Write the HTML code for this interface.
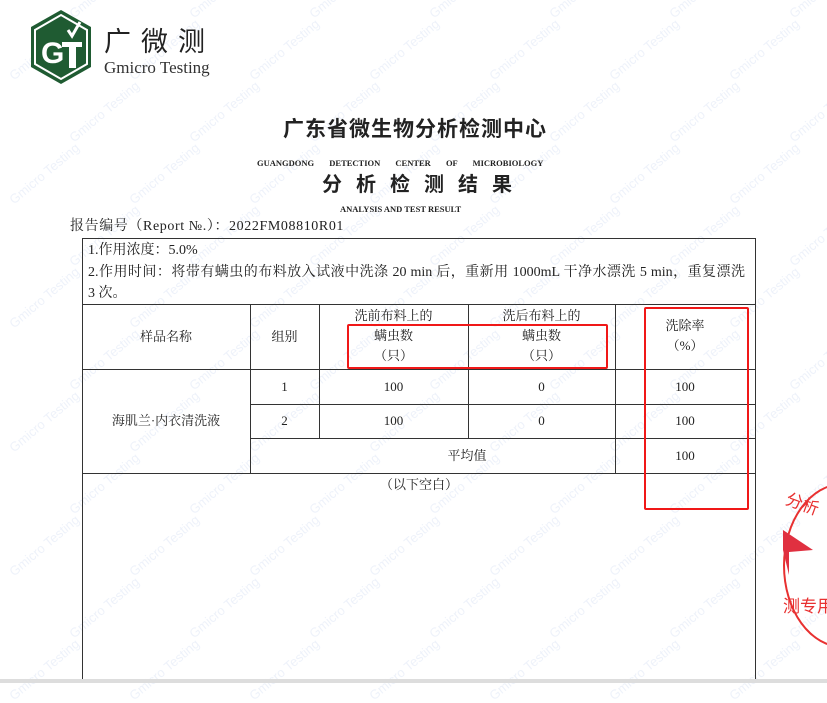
<!DOCTYPE html>
<html><head><meta charset="utf-8"><style>
*{margin:0;padding:0;box-sizing:border-box}
body{width:827px;height:683px;overflow:hidden;background:#fff;position:relative;font-family:"Liberation Serif","Noto Serif CJK SC",serif;color:#222}
.a{position:absolute;white-space:nowrap}
.l{position:absolute;background:#333}
.t{position:absolute;text-align:center;font-size:13px;line-height:20px}
.wm{position:absolute;color:#eef2fa;font-family:"Liberation Sans",sans-serif;font-size:13px;transform:rotate(-40deg);white-space:nowrap}
.j{display:block;width:657px;text-align:justify;text-align-last:justify}
</style></head><body>
<div id="wmk"></div>
<script>
var h='';for(var y=-20;y<720;y+=62){for(var x=-40;x<860;x+=120){h+='<div class="wm" style="left:'+(x+(y/62%2)*60)+'px;top:'+y+'px">Gmicro Testing</div>';}}document.getElementById('wmk').innerHTML=h;
</script>
<svg class="a" style="left:28px;top:8px" width="66" height="78" viewBox="0 0 66 78">
<polygon points="33,2 63,19 63,59 33,76 3,59 3,19" fill="#1f5b32"/>
<polygon points="33,7 59,22 59,56 33,71 7,56 7,22" fill="none" stroke="#fff" stroke-width="2"/>
<text x="13" y="55" font-family="Liberation Sans" font-weight="bold" font-size="30" fill="#fff">G</text>
<rect x="34" y="34" width="20" height="5" fill="#fff"/><rect x="41" y="34" width="7" height="26" fill="#fff"/>
<path d="M40 22 L44 28 L52 14" stroke="#fff" stroke-width="3" fill="none"/>
</svg>
<div class="a" style="left:104px;top:24px;font-family:'Noto Sans CJK SC',sans-serif;font-size:27px;letter-spacing:10px;color:#222;line-height:32px">广微测</div>
<div class="a" style="left:104px;top:58px;font-size:17px;color:#333">Gmicro Testing</div>

<div class="a" style="left:283px;top:115px;font-family:'Noto Sans CJK SC',sans-serif;font-size:21px;line-height:26px;font-weight:bold;letter-spacing:1px">广东省微生物分析检测中心</div>
<div class="a" style="left:257px;top:157px;font-size:8.5px;font-weight:bold;word-spacing:13px;line-height:12px">GUANGDONG DETECTION CENTER OF MICROBIOLOGY</div>
<div class="a" style="left:322px;top:170px;font-family:'Noto Sans CJK SC',sans-serif;font-size:20px;line-height:26px;font-weight:bold;letter-spacing:14px">分析检测结果</div>
<div class="a" style="left:340px;top:203px;font-size:8.5px;font-weight:bold;line-height:12px">ANALYSIS AND TEST RESULT</div>
<div class="a" style="left:70px;top:218px;font-size:14px;line-height:18px;letter-spacing:0.6px">报告编号（Report №.）：2022FM08810R01</div>

<div class="l" style="left:82px;top:238px;width:674px;height:1px"></div>
<div class="l" style="left:82px;top:238px;width:1px;height:445px"></div>
<div class="l" style="left:755px;top:238px;width:1px;height:445px"></div>
<div class="l" style="left:82px;top:304px;width:674px;height:1px"></div>
<div class="l" style="left:82px;top:369px;width:674px;height:1px"></div>
<div class="l" style="left:250px;top:404px;width:506px;height:1px"></div>
<div class="l" style="left:250px;top:438px;width:506px;height:1px"></div>
<div class="l" style="left:82px;top:473px;width:674px;height:1px"></div>
<div class="l" style="left:250px;top:304px;width:1px;height:169px"></div>
<div class="l" style="left:319px;top:304px;width:1px;height:134px"></div>
<div class="l" style="left:468px;top:304px;width:1px;height:134px"></div>
<div class="l" style="left:615px;top:304px;width:1px;height:169px"></div>

<div class="a" style="left:88px;top:240px;font-size:14px;line-height:21.5px">1.作用浓度：5.0%<span class="j">2.作用时间：将带有螨虫的布料放入试液中洗涤 20 min 后，重新用 1000mL 干净水漂洗 5 min，重复漂洗</span>3 次。</div>

<div class="t" style="left:82px;top:327px;width:168px">样品名称</div>
<div class="t" style="left:250px;top:327px;width:69px">组别</div>
<div class="t" style="left:319px;top:306px;width:149px">洗前布料上的<br>螨虫数<br>（只）</div>
<div class="t" style="left:468px;top:306px;width:147px">洗后布料上的<br>螨虫数<br>（只）</div>
<div class="t" style="left:615px;top:316px;width:140px">洗除率<br>（%）</div>
<div class="t" style="left:82px;top:411px;width:168px">海肌兰·内衣清洗液</div>
<div class="t" style="left:250px;top:377px;width:69px">1</div>
<div class="t" style="left:319px;top:377px;width:149px">100</div>
<div class="t" style="left:468px;top:377px;width:147px">0</div>
<div class="t" style="left:615px;top:377px;width:140px">100</div>
<div class="t" style="left:250px;top:411px;width:69px">2</div>
<div class="t" style="left:319px;top:411px;width:149px">100</div>
<div class="t" style="left:468px;top:411px;width:147px">0</div>
<div class="t" style="left:615px;top:411px;width:140px">100</div>
<div class="t" style="left:319px;top:446px;width:296px">平均值</div>
<div class="t" style="left:615px;top:446px;width:140px">100</div>
<div class="t" style="left:82px;top:475px;width:674px">（以下空白）</div>

<div class="a" style="left:347px;top:324px;width:261px;height:45px;border:2.5px solid #f01818;border-radius:2px"></div>
<div class="a" style="left:644px;top:307px;width:105px;height:203px;border:2.5px solid #f01818;border-radius:2px"></div>

<div class="a" style="left:783px;top:483px;width:120px;height:165px;border:2px solid #e83030;border-radius:50%;border-right:none"></div>
<div class="a" style="left:786px;top:490px;color:#e83030;font-family:'Noto Sans CJK SC',sans-serif;font-size:17px;transform:rotate(20deg)">分析</div>
<svg class="a" style="left:783px;top:530px" width="30" height="45"><polygon points="0,0 30,20 6,22 6,45 0,20" fill="#e03040"/></svg>
<div class="a" style="left:783px;top:592px;color:#e83030;font-family:'Noto Sans CJK SC',sans-serif;font-size:17px">测专用</div>
<div class="a" style="left:0;top:679px;width:827px;height:4px;background:#ddd"></div>
</body></html>
